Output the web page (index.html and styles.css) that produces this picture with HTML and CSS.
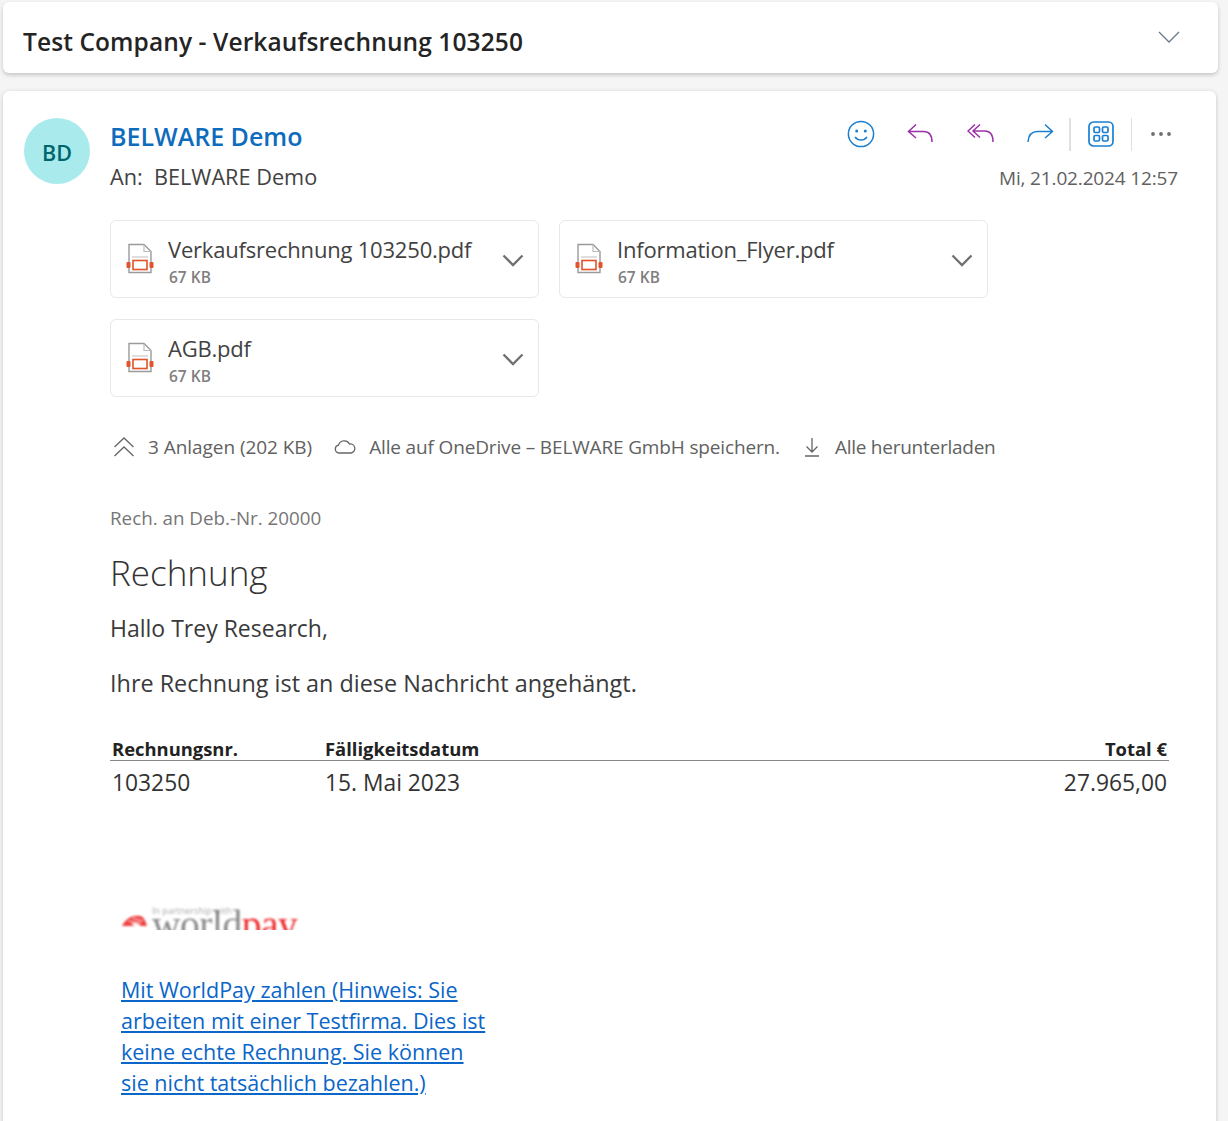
FILE: index.html
```html
<!DOCTYPE html>
<html lang="de">
<head>
  <meta charset="UTF-8">
  <title>Test Company - Verkaufsrechnung 103250</title>
  <link rel="stylesheet" href="styles.css">
</head>
<body>
  <header class="subject">
    <h1>Test Company - Verkaufsrechnung 103250</h1>
    <svg class="subject-chevron" width="22" height="12" viewBox="0 0 22 12"><path d="M1 1l10 10L21 1" fill="none" stroke="#6b7a8a" stroke-width="1.3"/></svg>
  </header>

  <main class="message">
    <section class="head">
      <div class="avatar">BD</div>
      <div class="sender">
        <div class="sender-name">BELWARE Demo</div>
        <div class="recipient">An:&nbsp; BELWARE Demo</div>
      </div>
      <div class="head-right">
        <div class="actions">
          <svg class="act act-smile" width="28" height="28" viewBox="0 0 28 28" fill="none" stroke="#1a7fd0" stroke-width="1.5"><circle cx="14" cy="14" r="12.6"/><circle cx="9.7" cy="11" r="1.5" fill="#1a7fd0" stroke="none"/><circle cx="18.3" cy="11" r="1.5" fill="#1a7fd0" stroke="none"/><path d="M8 17c3 4 9 4 12 0"/></svg>
          <svg class="act act-reply" width="28" height="22" viewBox="0 0 28 22" fill="none" stroke="#9b30a8" stroke-width="1.5"><path d="M9 1.5L1.5 8.500 9 15M1.500 8.500h15c5 0 8.500 3.500 8.500 10.500"/></svg>
          <svg class="act act-replyall" width="28" height="22" viewBox="0 0 28 22" fill="none" stroke="#9b30a8" stroke-width="1.5"><path d="M8 1.500L1 8l7 6.500M13 1.500L6 8l7 6.500M6 8h12c5 0 8 3.500 8 11"/></svg>
          <svg class="act act-forward" width="28" height="22" viewBox="0 0 28 22" fill="none" stroke="#1a7fd0" stroke-width="1.5"><path d="M19 1.500L26.500 8.500 19 15M26.500 8.500h-15C6 8.500 2.500 12 2 19"/></svg>
          <span class="divider"></span>
          <svg class="act act-apps" width="26" height="26" viewBox="0 0 26 26" fill="none" stroke="#1a7fd0" stroke-width="1.7"><rect x="1" y="1" width="24" height="24" rx="4.500"/><rect x="6" y="6" width="5.500" height="5.500" rx="1.200"/><rect x="14.500" y="6" width="5.500" height="5.500" rx="1.200"/><rect x="6" y="14.500" width="5.500" height="5.500" rx="1.200"/><rect x="14.500" y="14.500" width="5.500" height="5.500" rx="1.200"/></svg>
          <span class="divider divider-light"></span>
          <svg class="act act-more" width="22" height="6" viewBox="0 0 22 6" fill="#6f6f6f"><circle cx="3" cy="3" r="1.900"/><circle cx="11" cy="3" r="1.900"/><circle cx="19" cy="3" r="1.900"/></svg>
        </div>
        <div class="date">Mi, 21.02.2024 12:57</div>
      </div>
    </section>

    <section class="attachments">
      <div class="file">
        <svg class="file-icon" width="28" height="32" viewBox="0 0 28 32"><path d="M3 1.500h15l7 7v21H3z" fill="#fff" stroke="#9a9a9a" stroke-width="1.400"/><path d="M18 1.500v7h7M6 14h16" fill="none" stroke="#bdbdbd" stroke-width="1.200"/><rect x="7" y="17.500" width="14" height="9" fill="#fff" stroke="#e0532b" stroke-width="1.600"/><rect x="0.500" y="19" width="4" height="6" rx="1" fill="#e0532b"/><rect x="23.500" y="19" width="4" height="6" rx="1" fill="#e0532b"/></svg>
        <div class="file-text">
          <div class="file-name">Verkaufsrechnung 103250.pdf</div>
          <div class="file-size">67 KB</div>
        </div>
        <svg class="file-chevron" width="22" height="13" viewBox="0 0 22 13"><path d="M1.500 1.500L11 11l9.500-9.500" fill="none" stroke="#707070" stroke-width="2.300"/></svg>
      </div>
      <div class="file">
        <svg class="file-icon" width="28" height="32" viewBox="0 0 28 32"><path d="M3 1.500h15l7 7v21H3z" fill="#fff" stroke="#9a9a9a" stroke-width="1.400"/><path d="M18 1.500v7h7M6 14h16" fill="none" stroke="#bdbdbd" stroke-width="1.200"/><rect x="7" y="17.500" width="14" height="9" fill="#fff" stroke="#e0532b" stroke-width="1.600"/><rect x="0.500" y="19" width="4" height="6" rx="1" fill="#e0532b"/><rect x="23.500" y="19" width="4" height="6" rx="1" fill="#e0532b"/></svg>
        <div class="file-text">
          <div class="file-name">Information_Flyer.pdf</div>
          <div class="file-size">67 KB</div>
        </div>
        <svg class="file-chevron" width="22" height="13" viewBox="0 0 22 13"><path d="M1.500 1.500L11 11l9.500-9.500" fill="none" stroke="#707070" stroke-width="2.300"/></svg>
      </div>
      <div class="file">
        <svg class="file-icon" width="28" height="32" viewBox="0 0 28 32"><path d="M3 1.500h15l7 7v21H3z" fill="#fff" stroke="#9a9a9a" stroke-width="1.400"/><path d="M18 1.500v7h7M6 14h16" fill="none" stroke="#bdbdbd" stroke-width="1.200"/><rect x="7" y="17.500" width="14" height="9" fill="#fff" stroke="#e0532b" stroke-width="1.600"/><rect x="0.500" y="19" width="4" height="6" rx="1" fill="#e0532b"/><rect x="23.500" y="19" width="4" height="6" rx="1" fill="#e0532b"/></svg>
        <div class="file-text">
          <div class="file-name">AGB.pdf</div>
          <div class="file-size">67 KB</div>
        </div>
        <svg class="file-chevron" width="22" height="13" viewBox="0 0 22 13"><path d="M1.500 1.500L11 11l9.500-9.500" fill="none" stroke="#707070" stroke-width="2.300"/></svg>
      </div>
    </section>

    <section class="attach-bar">
      <div class="bar-item bar-item-count">
        <svg width="22" height="20" viewBox="0 0 22 20" fill="none" stroke="#666" stroke-width="1.300"><path d="M1.500 10L11 1l9.500 9M1.500 19L11 10l9.500 9"/></svg>
        <span>3 Anlagen (202 KB)</span>
      </div>
      <div class="bar-item">
        <svg width="22" height="14" viewBox="0 0 22 14" fill="none" stroke="#666" stroke-width="1.300"><path d="M6 13H5a4 4 0 0 1-.5-7.900A6 6 0 0 1 15.500 4 4.500 4.500 0 0 1 17 13z"/></svg>
        <span>Alle auf OneDrive – BELWARE GmbH speichern.</span>
      </div>
      <div class="bar-item bar-item-wide">
        <svg width="16" height="20" viewBox="0 0 16 20" fill="none" stroke="#666" stroke-width="1.300"><path d="M8 1v14M2.500 9.500L8 15l5.500-5.500M1 19h14"/></svg>
        <span>Alle herunterladen</span>
      </div>
    </section>

    <article class="body">
      <p class="preheader">Rech. an Deb.-Nr. 20000</p>
      <h2>Rechnung</h2>
      <p class="greeting">Hallo Trey Research,</p>
      <p class="intro">Ihre Rechnung ist an diese Nachricht angehängt.</p>

      <table class="invoice">
        <tr>
          <th class="col-no">Rechnungsnr.</th>
          <th>Fälligkeitsdatum</th>
          <th class="amount">Total €</th>
        </tr>
        <tr>
          <td>103250</td>
          <td>15. Mai 2023</td>
          <td class="amount">27.965,00</td>
        </tr>
      </table>

      <div class="logo">
        <div class="logo-inner">
          <svg class="logo-mark" width="27" height="22" viewBox="0 0 27 22"><path d="M1 16C5 8 12 5 19 6c3 .5 5 3 7 10h-6c-3-3-7-4-10-2l4 2z" fill="#ee4040"/><path d="M7 11l13 2M11 8l11 3" fill="none" stroke="#fff" stroke-width="0.900"/></svg>
          <div class="logo-text">
            <div class="logo-small">In partnership with</div>
            <div class="logo-word">world<span class="logo-red">pay</span></div>
          </div>
        </div>
      </div>

      <a class="pay-link" href="#">Mit WorldPay zahlen (Hinweis: Sie arbeiten mit einer Testfirma. Dies ist keine echte Rechnung. Sie können sie nicht tatsächlich bezahlen.)</a>
    </article>
  </main>
</body>
</html>
```

FILE: styles.css
```css
body {
  margin: 0;
  padding: 2px 10px 0 3px;
  height: 1119px;
  overflow: hidden;
  background-color: #f5f5f5;
  font-family: "Open Sans", "Noto Sans", sans-serif;
  color: #242424;
}
.subject {
  display: flex;
  align-items: center;
  justify-content: space-between;
  height: 64px;
  padding: 7px 38px 0 20px;
  background: #fff;
  border-radius: 6px;
  box-shadow: 0 2px 4px rgba(0, 0, 0, 0.2);
}
.subject h1 {
  margin: 0;
  font-size: 24.5px;
  font-weight: 600;
  letter-spacing: 0.1px;
  color: #242424;
}
.subject-chevron {
  margin-top: -9px;
}
.message {
  margin: 18px 2px 0 0;
  padding: 27px 38px 0 21px;
  height: 1040px;
  background: #fff;
  border-radius: 6px;
  box-shadow: 0 1px 4px rgba(0, 0, 0, 0.2);
}
.head {
  display: flex;
  align-items: flex-start;
}
.avatar {
  display: flex;
  align-items: center;
  justify-content: center;
  box-sizing: border-box;
  width: 66px;
  height: 66px;
  padding-top: 2px;
  border-radius: 50%;
  background: #a9eaed;
  color: #00666d;
  font-size: 21.5px;
  font-weight: 600;
}
.sender {
  margin-left: 20px;
  flex: 1;
}
.sender-name {
  font-size: 25px;
  font-weight: 600;
  line-height: 36px;
  color: #0f6cbd;
}
.recipient {
  font-size: 21.7px;
  line-height: 46px;
  color: #424242;
}
.head-right {
  display: flex;
  flex-direction: column;
  align-items: flex-end;
}
.actions {
  display: flex;
  align-items: center;
  height: 32px;
  margin-right: 6px;
}
.act {
  flex: none;
}
.act-reply,
.act-replyall {
  margin-left: 32px;
}
.act-forward {
  margin-left: 31px;
}
.divider {
  width: 2px;
  height: 33px;
  margin: 0 17px 0 15px;
  background: #e0e0e0;
}
.divider-light {
  width: 1px;
  margin: 0 18px 0 17px;
}
.date {
  margin-top: 14px;
  font-size: 19px;
  letter-spacing: -0.15px;
  line-height: 28px;
  color: #616161;
}
.attachments {
  display: grid;
  grid-template-columns: 429px 429px;
  gap: 21px 20px;
  margin: 20px 0 0 86px;
}
.file {
  display: flex;
  align-items: center;
  height: 76px;
  border: 1px solid #e8e8e8;
  border-radius: 6px;
  padding: 0 14px 0 15px;
  box-sizing: content-box;
}
.file-text {
  flex: 1;
  margin-left: 14px;
  padding-top: 1px;
}
.file-name {
  font-size: 22px;
  letter-spacing: -0.2px;
  line-height: 32px;
  color: #424242;
}
.file-size {
  margin: 2px 0 0 1px;
  font-size: 15.5px;
  font-weight: 600;
  line-height: 20px;
  color: #808080;
}
.file-chevron {
  margin-top: 2px;
}
.attach-bar {
  display: flex;
  align-items: center;
  gap: 24px;
  margin: 37px 0 0 89px;
  font-size: 19px;
  letter-spacing: -0.15px;
  color: #616161;
}
.bar-item {
  display: flex;
  align-items: center;
  gap: 13px;
}
.bar-item-count {
  margin-right: -2px;
  letter-spacing: -0.05px;
}
.bar-item-wide {
  gap: 15px;
  letter-spacing: -0.25px;
}
.body {
  margin: 44px 0 0 86px;
}
.preheader {
  margin: 0;
  font-size: 18.8px;
  line-height: 28px;
  color: #767676;
}
.body h2 {
  margin: 17px 0 0;
  font-size: 35px;
  font-weight: 300;
  line-height: 48px;
  color: #333;
}
.greeting,
.intro {
  margin: 0;
  font-size: 23px;
  line-height: 34px;
  color: #3a3a3a;
}
.greeting {
  margin-top: 14px;
}
.intro {
  margin-top: 21px;
  font-size: 23.4px;
}
.invoice {
  width: 1059px;
  margin: 38px 0 0;
  border-collapse: collapse;
  font-size: 22.8px;
  color: #333;
}
.invoice th {
  padding: 0 2px;
  font-size: 18.4px;
  font-weight: 700;
  line-height: 22px;
  text-align: left;
  border-bottom: 1px solid #888;
  color: #222;
}
.invoice td {
  padding: 7px 2px 0;
  line-height: 30px;
}
.invoice .amount {
  text-align: right;
}
.col-no {
  width: 209px;
}
.logo {
  height: 24px;
  margin: 108px 0 0 11px;
  overflow: hidden;
}
.logo-inner {
  display: flex;
  align-items: flex-start;
  width: 190px;
  filter: blur(0.8px);
}
.logo-mark {
  margin: 4px 4px 0 0;
  flex: none;
}
.logo-small {
  font-size: 9px;
  line-height: 10px;
  color: #aaa;
}
.logo-word {
  margin-top: -6px;
  font-family: "Liberation Serif", serif;
  font-size: 39.5px;
  line-height: 30px;
  letter-spacing: -0.5px;
  color: #888;
}
.logo-red {
  color: #ee2a2a;
}
.pay-link {
  display: block;
  width: 370px;
  margin: 44px 0 0 11px;
  font-size: 21.5px;
  line-height: 31px;
  color: #0a66c8;
  text-decoration: underline;
}
```
